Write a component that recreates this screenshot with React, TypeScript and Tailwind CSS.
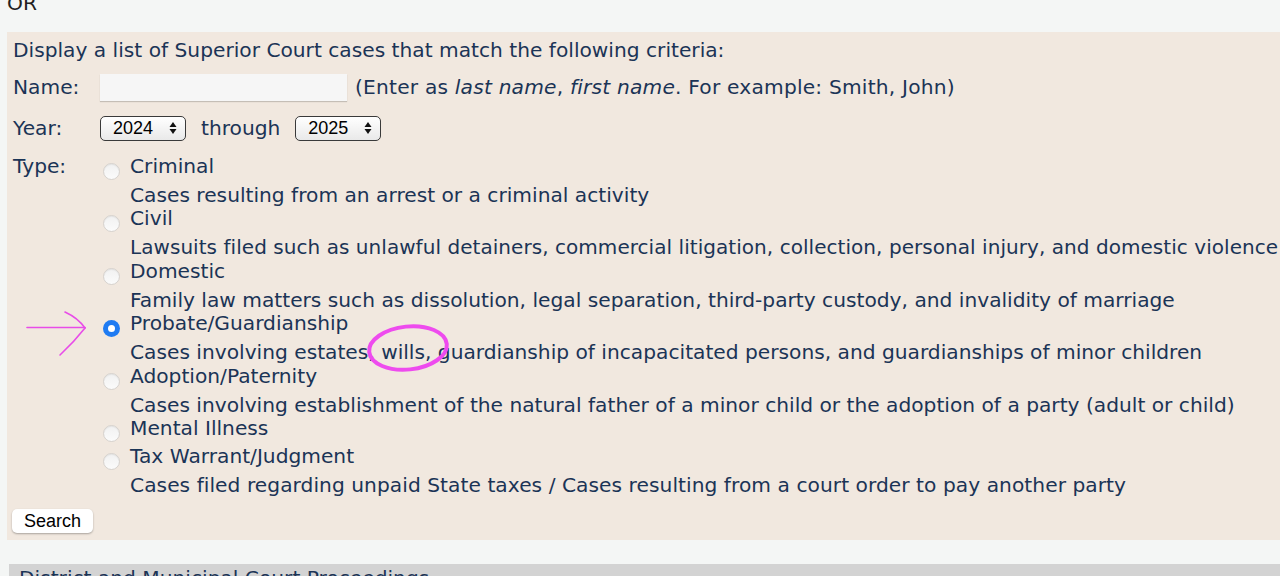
import React from "react";

const navy = "text-[#1b3456]";

function Radio({ checked }: { checked?: boolean }) {
  if (checked) {
    return (
      <div className="mt-[8px] ml-[3px] flex h-[17px] w-[17px] shrink-0 items-center justify-center rounded-full bg-[#1f7bf2]">
        <div className="h-[7px] w-[7px] rounded-full bg-white" />
      </div>
    );
  }
  return (
    <div className="mt-[8px] ml-[3px] h-[17px] w-[17px] shrink-0 rounded-full border border-[#d6d2ce] bg-gradient-to-b from-[#f1f1f1] to-[#fbfbfb] shadow-[inset_0_1px_1px_rgba(0,0,0,0.06)]" />
  );
}

function TypeItem({
  label,
  desc,
  checked,
  descClass,
}: {
  label: string;
  desc?: string;
  checked?: boolean;
  descClass?: string;
}) {
  return (
    <div className="flex flex-col">
      <div className="flex h-[28px] items-start">
        <Radio checked={checked} />
        <span className="ml-[10px] h-[23px] leading-[23px]">{label}</span>
      </div>
      {desc && <div className={`ml-[30px] h-[24.4px] leading-[24px] ${descClass ?? ""}`}>{desc}</div>}
    </div>
  );
}

function FakeSelect({ value }: { value: string }) {
  return (
    <div className="flex h-[25px] w-[86px] items-center justify-between rounded-[5px] border border-[#3a3a3a] bg-gradient-to-b from-[#ffffff] to-[#e9e9e9] pl-[12px] pr-[8px] font-['Liberation_Sans',Arial,sans-serif] text-[18px] leading-[25px] text-black">
      <span>{value}</span>
      <svg width="8" height="14" viewBox="0 0 8 14">
        <polygon points="4,1 7.5,6 0.5,6" fill="#111" />
        <polygon points="4,13 7.5,8 0.5,8" fill="#111" />
      </svg>
    </div>
  );
}

export default function App() {
  const types: { label: string; desc?: string; checked?: boolean; descClass?: string }[] = [
    { label: "Criminal", desc: "Cases resulting from an arrest or a criminal activity" },
    {
      label: "Civil",
      desc: "Lawsuits filed such as unlawful detainers, commercial litigation, collection, personal injury, and domestic violence",
      descClass: "text-[20px] tracking-[0.05px]",
    },
    {
      label: "Domestic",
      desc: "Family law matters such as dissolution, legal separation, third-party custody, and invalidity of marriage",
    },
    {
      label: "Probate/Guardianship",
      desc: "Cases involving estates, wills, guardianship of incapacitated persons, and guardianships of minor children",
      checked: true,
    },
    {
      label: "Adoption/Paternity",
      desc: "Cases involving establishment of the natural father of a minor child or the adoption of a party (adult or child)",
    },
    { label: "Mental Illness" },
    {
      label: "Tax Warrant/Judgment",
      desc: "Cases filed regarding unpaid State taxes / Cases resulting from a court order to pay another party",
      descClass: "tracking-[0.05px]",
    },
  ];

  return (
    <div className="relative h-[576px] w-full overflow-hidden bg-[#f4f6f5] font-['DejaVu_Sans',Verdana,sans-serif] text-[20.2px] whitespace-nowrap">
      <div className="-mt-[9px] ml-[7px] h-[24px] leading-[24px] text-[#222]">OR</div>

      <div className={`mt-[17px] ml-[7px] w-[1320px] bg-[#f1e8df] pt-[6px] pb-[7px] ${navy}`}>
        <div className="ml-[6px] h-[24px] leading-[24px]">
          Display a list of Superior Court cases that match the following criteria:
        </div>

        <div className="mt-[9px] flex h-[32px] items-center">
          <div className="ml-[6px] w-[87px] leading-[24px]">Name:</div>
          <input
            className="h-[27px] w-[247px] bg-[#f6f6f6] shadow-[0_1px_1px_rgba(0,0,0,0.18)] outline-none"
            type="text"
          />
          <div className="ml-[8px] leading-[24px] tracking-[0.2px]">
            (Enter as <i>last name</i>, <i>first name</i>. For example: Smith, John)
          </div>
        </div>

        <div className="mt-[10px] flex h-[30px] items-center">
          <div className="ml-[6px] w-[87px] leading-[24px]">Year:</div>
          <FakeSelect value="2024" />
          <div className="mx-[15px] leading-[24px]">through</div>
          <FakeSelect value="2025" />
        </div>

        <div className="mt-[12px] flex">
          <div className="ml-[6px] w-[87px] h-[23px] leading-[23px]">Type:</div>
          <div className="flex flex-col">
            {types.map((t) => (
              <TypeItem key={t.label} label={t.label} desc={t.desc} checked={t.checked} descClass={t.descClass} />
            ))}
          </div>
        </div>

        <button className="mt-[12px] ml-[5px] flex h-[24px] w-[81px] items-center justify-center rounded-[5px] bg-white font-['Liberation_Sans',Arial,sans-serif] text-[18px] text-black shadow-[0_1px_2px_rgba(0,0,0,0.3)]">
          Search
        </button>
      </div>

      <div className={`mt-[24px] ml-[9px] w-[1320px] bg-[#d3d3d3] pt-[2px] pl-[10px] h-[40px] leading-[24px] ${navy}`}>
        District and Municipal Court Proceedings
      </div>

      <svg className="pointer-events-none absolute left-0 top-0" width="1280" height="576" viewBox="0 0 1280 576">
        <path d="M27 327.5 L85 327.5" stroke="#e84ce8" strokeWidth="1.6" fill="none" strokeLinecap="round" />
        <path d="M65 312 Q78 318 85 328" stroke="#e84ce8" strokeWidth="1.6" fill="none" strokeLinecap="round" />
        <path d="M85 328 Q74 342 60 355" stroke="#e84ce8" strokeWidth="1.6" fill="none" strokeLinecap="round" />
        <ellipse cx="408" cy="348" rx="39" ry="21.5" transform="rotate(-6 408 348)" stroke="#ee4bee" strokeWidth="4" fill="none" />
      </svg>
    </div>
  );
}
